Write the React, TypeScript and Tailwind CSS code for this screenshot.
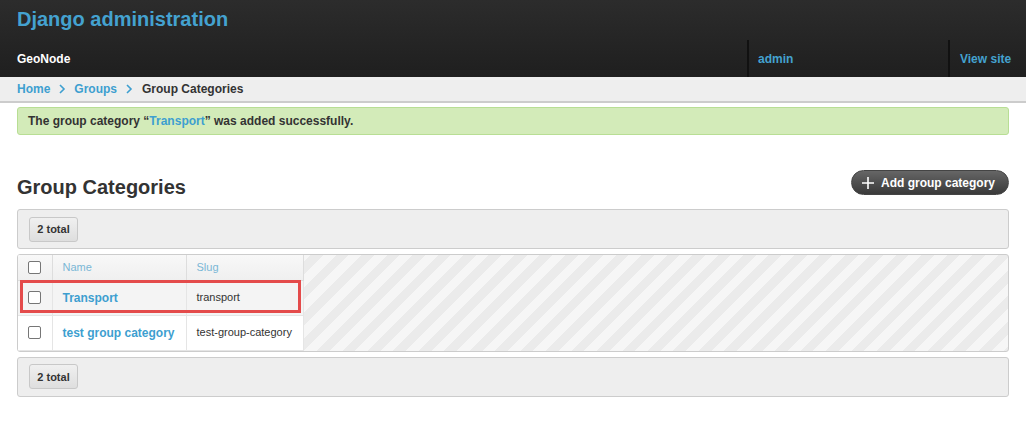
import React from "react";

const Checkbox: React.FC = () => (
    <span className="inline-block w-[13px] h-[13px] rounded-[2px] border border-[#767676] bg-white" />
);

const Chevron: React.FC = () => (
    <svg width="8" height="10" viewBox="0 0 8 10" className="mx-[8px]">
        <path d="M2 1l4 4-4 4" fill="none" stroke="#3d9fd0" strokeWidth="1.6" />
    </svg>
);

const Paginator: React.FC = () => (
    <div className="h-[40px] bg-[#eeeeee] border border-[#cccccc] rounded-[3px] pl-[11px] pt-[6px]">
        <span className="inline-flex items-center justify-center h-[25px] w-[49px] rounded-[3px] border border-[#c8c8c8] bg-gradient-to-b from-[#f0f0f0] to-[#dedede] text-[11px] font-bold text-[#333]">
            2 total
        </span>
    </div>
);

const rows = [
    { name: "Transport", slug: "transport", bg: "bg-[#f4f4f4]" },
    { name: "test group category", slug: "test-group-category", bg: "bg-white" },
];

export default function App() {
    return (
        <div className="w-[1026px] h-[444px] bg-white font-['Liberation_Sans',Arial,sans-serif] text-[#333] overflow-hidden">
            <header className="bg-gradient-to-b from-[#2c2c2c] to-[#1f1f1f]">
                <div className="h-[40px] pl-[17px] pt-[6px]">
                    <h1 className="text-[20px] leading-[26px] font-bold text-[#44a2d0]">Django administration</h1>
                </div>
                <div className="h-[37px] flex items-stretch text-[12px] font-bold">
                    <div className="flex-1 pl-[17px] flex items-center text-white">GeoNode</div>
                    <div className="w-[201px] border-l-2 border-[#111] pl-[9px] flex items-center text-[#44a2d0]">admin</div>
                    <div className="w-[78px] border-l-2 border-[#111] pl-[10px] flex items-center text-[#44a2d0]">View site</div>
                </div>
            </header>

            <div className="h-[26px] bg-[#eeeeee] border-b-2 border-[#cccccc] pl-[17px] flex items-center text-[12px] font-bold">
                <span className="text-[#3d9fd0]">Home</span>
                <Chevron />
                <span className="text-[#3d9fd0]">Groups</span>
                <Chevron />
                <span className="text-[#333] ml-[1px]">Group Categories</span>
            </div>

            <div className="px-[17px] pt-[4px]">
                <div className="h-[28px] bg-[#d3ebb9] border border-[#b8de94] rounded-[3px] pl-[10px] flex items-center text-[12px] font-bold text-[#333]">
                    The group category “<span className="text-[#3d9fd0]">Transport</span>” was added successfully.
                </div>

                <div className="mt-[35px] flex justify-between items-start">
                    <h2 className="mt-[5px] text-[20px] leading-[24px] font-bold text-[#333]">Group Categories</h2>
                    <span className="h-[25px] w-[158px] rounded-full bg-gradient-to-b from-[#666] to-[#3a3a3a] border border-[#444] flex items-center pl-[9px] text-white text-[12px] font-bold">
                        <svg width="14" height="14" viewBox="0 0 14 14" className="mr-[6px]">
                            <path d="M7 1v12M1 7h12" stroke="#fff" strokeWidth="1.6" />
                        </svg>
                        Add group category
                    </span>
                </div>

                <div className="mt-[10px]">
                    <Paginator />
                </div>

                <div className="mt-[5px] relative border border-[#cccccc] rounded-[3px] overflow-hidden bg-[repeating-linear-gradient(135deg,#f6f6f6_0px,#f6f6f6_9px,#ebebeb_9px,#ebebeb_18px)]">
                    <table className="table-fixed border-collapse bg-white w-[285px] text-[11px]">
                        <colgroup>
                            <col className="w-[34px]" />
                            <col className="w-[134px]" />
                            <col className="w-[117px]" />
                        </colgroup>
                        <thead>
                            <tr className="h-[25px] bg-gradient-to-b from-[#f8f8f8] to-[#efefef]">
                                <th className="border-r border-b border-[#dddddd] text-center align-middle">
                                    <span className="flex justify-center"><Checkbox /></span>
                                </th>
                                <th className="border-r border-b border-[#dddddd] text-left font-normal pl-[10px] text-[#7ab7d6]">Name</th>
                                <th className="border-r border-b border-[#dddddd] text-left font-normal pl-[10px] text-[#7ab7d6]">Slug</th>
                            </tr>
                        </thead>
                        <tbody>
                            {rows.map(r => (
                                <tr key={r.name} className={`h-[35px] ${r.bg}`}>
                                    <td className="border-r border-b border-[#e5e5e5] text-center">
                                        <span className="flex justify-center"><Checkbox /></span>
                                    </td>
                                    <td className="border-r border-b border-[#e5e5e5] pl-[10px] text-[12px] font-bold text-[#3d9fd0] whitespace-nowrap">{r.name}</td>
                                    <td className="border-r border-b border-[#e5e5e5] pl-[10px] text-[#333] whitespace-nowrap">{r.slug}</td>
                                </tr>
                            ))}
                        </tbody>
                    </table>
                    <div className="absolute left-[2px] top-[25px] w-[281px] h-[33px] border-[3px] border-[#e44b4b]" />
                </div>

                <div className="mt-[5px]">
                    <Paginator />
                </div>
            </div>
        </div>
    );
}
